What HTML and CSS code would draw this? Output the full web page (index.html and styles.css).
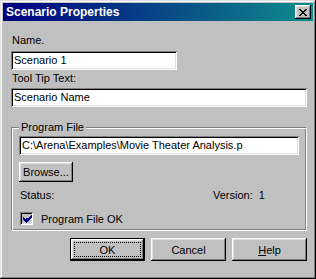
FILE: index.html
```html
<!DOCTYPE html>
<html lang="en">
<head>
    <meta charset="UTF-8">
    <title>Scenario Properties</title>
    <link rel="stylesheet" href="styles.css">
</head>
<body>

    <div class="window">
        <div class="title-bar">
            <span class="title-text">Scenario Properties</span>
            <button class="close-button">
                <svg width="8" height="7" viewBox="0 0 8 7" shape-rendering="crispEdges">
                    <path fill="#000" d="M0 0h2v1H0z M6 0h2v1H6z M1 1h2v1H1z M5 1h2v1H5z M2 2h4v1H2z M3 3h2v1H3z M2 4h4v1H2z M1 5h2v1H1z M5 5h2v1H5z M0 6h2v1H0z M6 6h2v1H6z"/>
                </svg>
            </button>
        </div>

        <div class="content">
            <label class="field-label">Name.</label>
            <div class="text-box name-box">Scenario 1</div>

            <label class="field-label second">Tool Tip Text:</label>
            <div class="text-box tip-box">Scenario Name</div>

            <div class="group-box">
                <span class="group-title">Program File</span>
                <div class="text-box path-box">C:\Arena\Examples\Movie Theater Analysis.p</div>
                <button class="win-button browse-button">Browse...</button>

                <div class="status-row">
                    <span class="status-label">Status:</span>
                    <span>Version:&nbsp; 1</span>
                </div>

                <div class="check-row">
                    <span class="check-box">
                        <svg width="9" height="9" viewBox="0 0 9 9" shape-rendering="crispEdges">
                            <path fill="#000080" d="M8 0h1v1H8z M7 1h2v1H7z M0 2h1v1H0z M6 2h3v1H6z M0 3h2v1H0z M3 3h5v1H3z M0 4h7v1H0z M1 5h5v1H1z M2 6h3v1H2z M3 7h1v1H3z"/>
                        </svg>
                    </span>
                    <span>Program File OK</span>
                </div>
            </div>

            <div class="button-row">
                <button class="win-button default-button">OK</button>
                <button class="win-button">Cancel</button>
                <button class="win-button"><u>H</u>elp</button>
            </div>
        </div>
    </div>

</body>
</html>
```

FILE: styles.css
```css
/* ventana estilo win95 */

* {
  box-sizing: border-box;
}
body {
  margin: 0;
  background: #c0c0c0;
  font-family: "Liberation Sans", Arial, sans-serif;
  font-size: 11px;
  color: #000;
}
.window {
  width: 316px;
  height: 279px;
  padding: 3px;
  background: #c0c0c0;
  box-shadow: inset -1px -1px #000, inset 1px 1px #dfdfdf, inset -2px -2px #808080, inset 2px 2px #fff;
}
.title-bar {
  height: 18px;
  display: flex;
  align-items: center;
  justify-content: space-between;
  padding: 0 2px 0 3px;
  background: linear-gradient(to right, #000080, #0f8c8c);
}
.title-text {
  color: #fff;
  font-weight: bold;
  font-size: 12px;
}
.close-button {
  width: 16px;
  height: 14px;
  padding: 0;
  border: none;
  background: #c0c0c0;
  display: flex;
  align-items: center;
  justify-content: center;
  box-shadow: inset -1px -1px #000, inset 1px 1px #fff, inset -2px -2px #808080, inset 2px 2px #dfdfdf;
}
.content {
  padding: 13px 6px 0 8px;
}
.field-label {
  display: block;
  height: 13px;
  line-height: 13px;
  margin: 0 0 4px 1px;
}
.field-label.second {
  margin-top: 2px;
  margin-bottom: 3px;
}
.text-box {
  height: 19px;
  line-height: 15px;
  padding: 2px 3px;
  background: #fff;
  white-space: nowrap;
  overflow: hidden;
  box-shadow: inset 1px 1px #808080, inset -1px -1px #fff, inset 2px 2px #000, inset -2px -2px #dfdfdf;
}
.name-box {
  width: 166px;
}
.tip-box {
  width: 296px;
}
.group-box {
  position: relative;
  width: 295px;
  margin-top: 20px;
  padding: 8px 6px 5px 7px;
  border: 1px solid #808080;
  border-right-width: 0;
  border-bottom-width: 0;
  box-shadow: inset 1px 1px #fff, 1px 1px #fff, inset -1px -1px #808080;
}
.group-title {
  position: absolute;
  top: -7px;
  left: 7px;
  padding: 0 2px;
  line-height: 13px;
  background: #c0c0c0;
}
.path-box {
  width: 280px;
}
.win-button {
  height: 23px;
  padding: 0;
  border: none;
  background: #c0c0c0;
  font-family: inherit;
  font-size: 11px;
  color: #000;
  box-shadow: inset -1px -1px #000, inset 1px 1px #fff, inset -2px -2px #808080, inset 2px 2px #dfdfdf;
}
.browse-button {
  display: block;
  width: 54px;
  height: 20px;
  margin-top: 7px;
}
.status-row {
  display: flex;
  margin-top: 7px;
  line-height: 13px;
}
.status-label {
  width: 194px;
  padding-left: 1px;
}
.check-row {
  display: flex;
  align-items: center;
  gap: 8px;
  margin-top: 10px;
  margin-left: 1px;
  height: 13px;
}
.check-box {
  width: 13px;
  height: 13px;
  display: flex;
  align-items: center;
  justify-content: center;
  padding: 1px 0 0 1px;
  background: #c0c0c0;
  box-shadow: inset 1px 1px #808080, inset -1px -1px #fff, inset 2px 2px #000, inset -2px -2px #dfdfdf;
}
.button-row {
  display: flex;
  justify-content: flex-end;
  gap: 6px;
  margin-top: 8px;
}
.button-row .win-button {
  width: 75px;
}
.default-button {
  border: 1px solid #000;
  outline: 1px dotted #000;
  outline-offset: -5px;
}
```
